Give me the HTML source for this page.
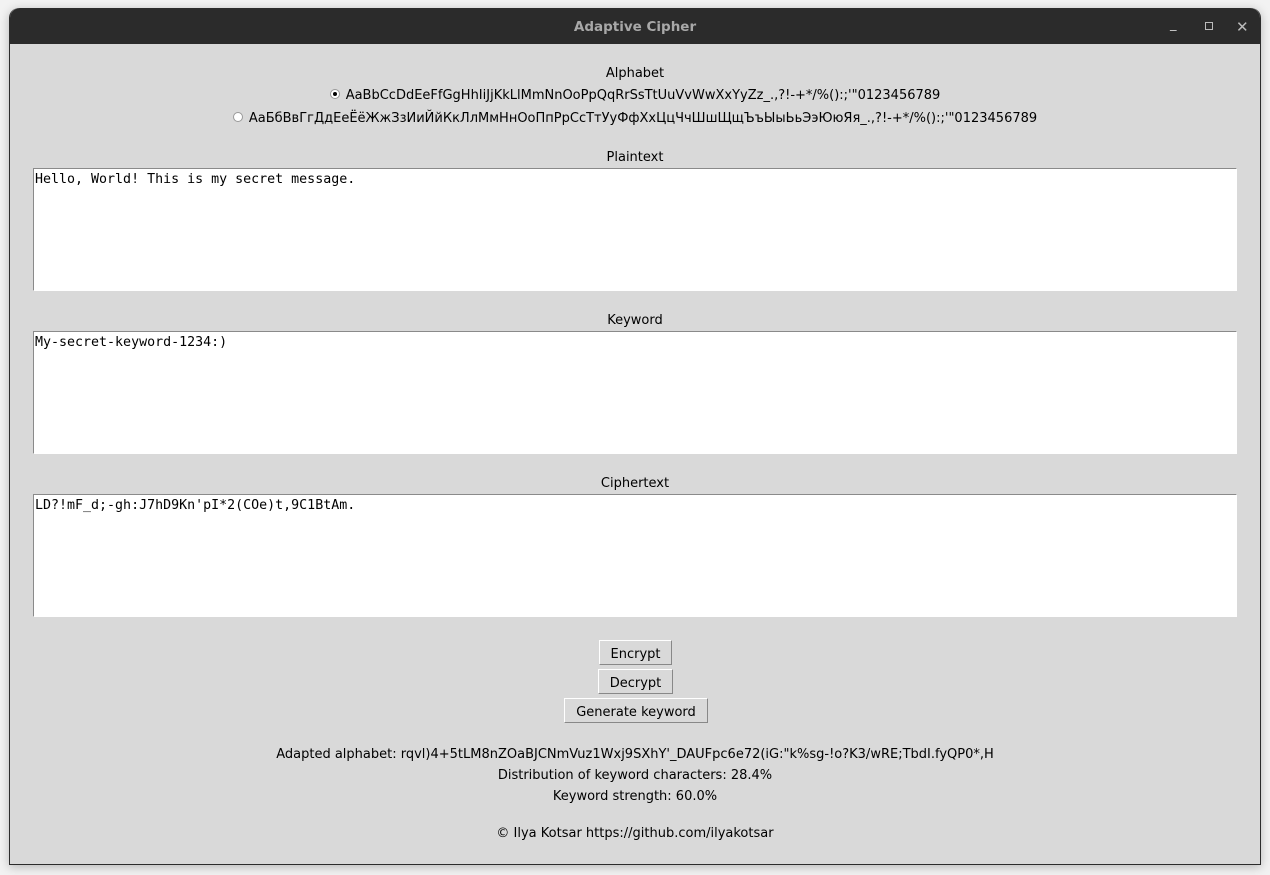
<!DOCTYPE html>
<html><head><meta charset="utf-8"><style>
html,body{margin:0;padding:0;width:1270px;height:875px;background:#f2f2f2;overflow:hidden;font-family:"DejaVu Sans","Liberation Sans",sans-serif;}
.win{position:absolute;left:9px;top:8px;width:1250px;height:856px;background:#d9d9d9;border:1px solid #2c2c2c;border-top:none;border-radius:10px 10px 0 0;box-shadow:0 2px 10px rgba(0,0,0,.25);}
.title{position:absolute;left:0;top:0;width:1250px;height:36px;background:#2b2b2b;border-radius:10px 10px 0 0;color:#a8a8a8;font-weight:bold;font-size:13.5px;text-align:center;line-height:38px;}
.t{position:absolute;left:0;width:1250px;text-align:center;font-size:13px;color:#000;white-space:nowrap;}
.box{position:absolute;left:23px;width:1204px;background:#fff;border-top:1px solid #8a8a8a;border-left:1px solid #8a8a8a;border-right:1px solid #fff;border-bottom:1px solid #fff;font-family:"DejaVu Sans Mono","Liberation Mono",monospace;font-size:13.3px;padding:3px 1px;box-sizing:border-box;height:123px;white-space:pre;}
.btn{position:absolute;height:25px;box-sizing:border-box;background:#d9d9d9;border:1px solid;border-color:#fff #888 #888 #fff;font-size:13px;text-align:center;line-height:27px;}
.rad{display:inline-block;width:8px;height:8px;border-radius:50%;background:#fff;border:1px solid #999;vertical-align:0px;margin-right:6px;position:relative;}
.rad.on::after{content:"";position:absolute;left:2px;top:2px;width:4px;height:4px;border-radius:50%;background:#000;}
</style></head><body>
<div class="win">
<div class="title">Adaptive Cipher
<span style="position:absolute;left:1160px;top:-2px;font-weight:normal;color:#ccc;font-size:13px">_</span>
<span style="position:absolute;left:1195px;top:14px;width:8px;height:8px;border:1px solid #bbb;box-sizing:border-box"></span>
<span style="position:absolute;left:1226px;top:0;font-weight:normal;color:#bbb;font-size:15px">✕</span>
</div>
<div class="t" style="top:58px">Alphabet</div>
<div class="t" style="top:80px;left:0"><span class="rad on"></span>AaBbCcDdEeFfGgHhIiJjKkLlMmNnOoPpQqRrSsTtUuVvWwXxYyZz_.,?!-+*/%():;'"0123456789</div>
<div class="t" style="top:103px"><span class="rad"></span>АаБбВвГгДдЕеЁёЖжЗзИиЙйКкЛлМмНнОоПпРрСсТтУуФфХхЦцЧчШшЩщЪъЫыЬьЭэЮюЯя_.,?!-+*/%():;'"0123456789</div>
<div class="t" style="top:142px">Plaintext</div>
<div class="box" style="top:160px">Hello, World! This is my secret message.</div>
<div class="t" style="top:305px">Keyword</div>
<div class="box" style="top:323px">My-secret-keyword-1234:)</div>
<div class="t" style="top:468px">Ciphertext</div>
<div class="box" style="top:486px">LD?!mF_d;-gh:J7hD9Kn'pI*2(COe)t,9C1BtAm.</div>
<div class="btn" style="left:589px;top:632px;width:73px">Encrypt</div>
<div class="btn" style="left:588px;top:661px;width:75px">Decrypt</div>
<div class="btn" style="left:554px;top:690px;width:144px">Generate keyword</div>
<div class="t" style="top:739px">Adapted alphabet: rqvl)4+5tLM8nZOaBJCNmVuz1Wxj9SXhY'_DAUFpc6e72(iG:"k%sg-!o?K3/wRE;TbdI.fyQP0*,H</div>
<div class="t" style="top:760px">Distribution of keyword characters: 28.4%</div>
<div class="t" style="top:781px">Keyword strength: 60.0%</div>
<div class="t" style="top:818px">© Ilya Kotsar https://github.com/ilyakotsar</div>
</div>
</body></html>
